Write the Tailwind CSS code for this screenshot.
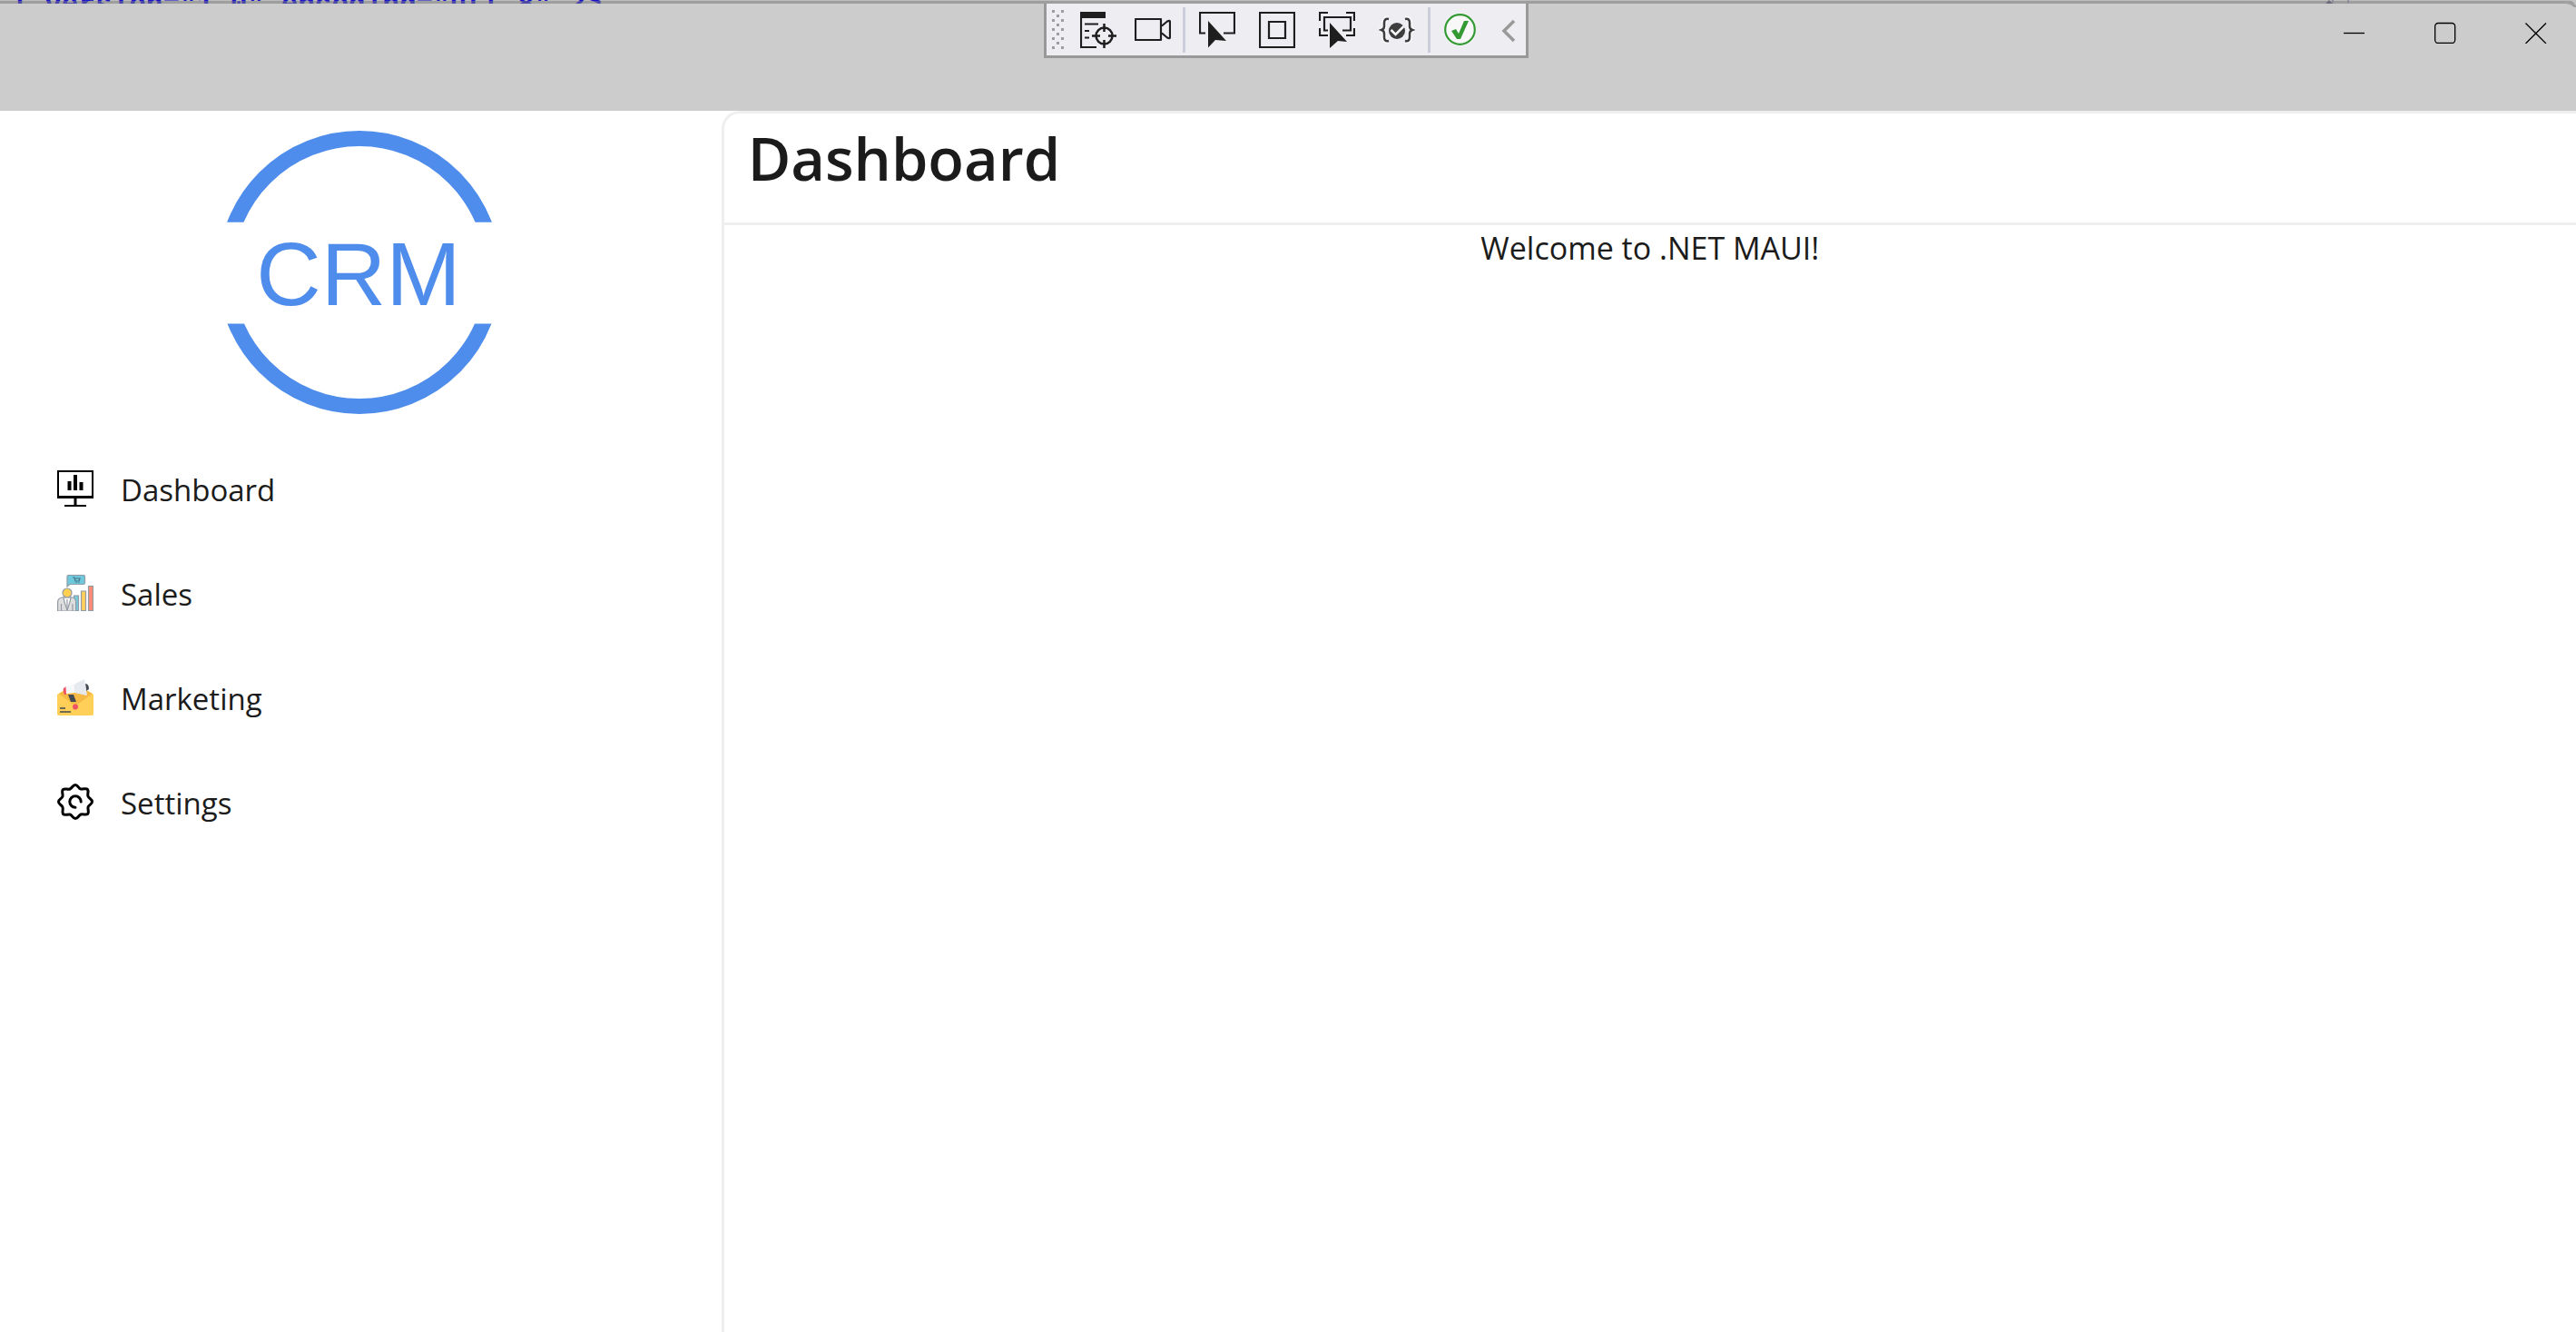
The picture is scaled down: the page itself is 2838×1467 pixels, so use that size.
<!DOCTYPE html>
<html lang="en">
<head>
<meta charset="utf-8">
<title>Dashboard</title>
<script src="https://cdn.jsdelivr.net/npm/@tailwindcss/browser@4"></script>
</head>
<body class="flex min-h-screen flex-col bg-white font-['Open_Sans',sans-serif] text-[#1b1b1b]">
<header class="relative h-[122px] bg-[#cccccc]">
  <!-- editor line behind the window's top edge -->
  <div class="relative h-1 overflow-hidden bg-[#bdbdbd]">
    <pre class="-mt-[10px] ml-3 font-['Liberation_Mono',monospace] text-[31px] leading-8 font-bold text-[#1a12cc]">l version="1.0" encoding="utf-8" ?&gt;</pre>
    <div class="absolute inset-x-0 top-px h-[3px] bg-[#808080]/50"></div>
  </div>
  <svg class="absolute top-0 right-0 h-2 w-3" viewBox="0 0 12 8" fill="none"><path d="M0 2.5Q7 2.5 12 8" stroke="#a0a0a0" stroke-width="3"/><path d="M5 0h7v5Q9 2 5 0" fill="#c4c4c4"/></svg>
  <svg class="absolute top-0 right-[225px] h-1 w-[60px]" viewBox="0 0 60 4"><path d="M-12 4l5-4 4 4z" fill="#6b6b7c"/><path d="M0 4l4-4 4 4z" fill="#6b6b7c" visibility="hidden"/><path d="M17 0v4M34 0v4" stroke="#8f8f9c" stroke-width="2"/></svg>
  <svg class="absolute top-0 right-[268px] h-1 w-2" viewBox="0 0 8 4"><path d="M0 4l4-4 4 4z" fill="#6b6b7c"/></svg>

  <div role="toolbar" aria-label="Debug tools" class="absolute top-1 left-1/2 -ml-[269px] flex h-[60px] w-[534px] items-center border-[3px] border-t-0 border-[#999999] bg-[#eeedf2] pt-px pl-1.5 text-[#1e1e1e]">
    <svg class="h-[44px] w-[14px]" viewBox="0 0 14 44" fill="#9c9ca2"><path d="M0 0h3v3H0zM10 0h3v3h-3zM5 5h3v3H5zM0 10h3v3H0zM10 10h3v3h-3zM5 15h3v3H5zM0 20h3v3H0zM10 20h3v3h-3zM5 25h3v3H5zM0 30h3v3H0zM10 30h3v3h-3zM5 35h3v3H5zM0 40h3v3H0zM10 40h3v3h-3z"/></svg>
    <button aria-label="Live visual tree" class="ml-[17px]"><svg class="size-10" viewBox="0 0 40 40" fill="none" stroke="currentColor" stroke-width="2.2"><path d="M0 0h28v7H0z" fill="currentColor" stroke="none"/><path d="M1 6v33h17M5 13.5h15M5 21h5M5 28.500h5"/><circle cx="26.500" cy="26.500" r="9" stroke-width="2.500"/><path d="M26.500 13v9M26.500 31v9M13 26.500h9M31 26.500h9" stroke-width="2.500"/></svg></button>
    <button aria-label="Record" class="ml-5"><svg class="size-10" viewBox="0 0 40 40" fill="none" stroke="currentColor" stroke-width="2.2" stroke-linejoin="round"><path d="M1 8h28v23H1zM30 15.500l6-5q3-1.500 3 .5v17q0 2-3 .5l-6-5"/></svg></button>
    <div class="ml-[13px] h-[50px] w-[3px] bg-[#cccedb]"></div>
    <button aria-label="Select element" class="ml-[15px]"><svg class="size-10" viewBox="0 0 40 40" fill="none" stroke="currentColor" stroke-width="2.2"><path d="M7 23.500H1V1h38v22.500H27"/><path d="M10 10l20 22-12-1-8 8.500z" fill="currentColor" stroke="none"/></svg></button>
    <button aria-label="Display layout adorners" class="ml-[26px]"><svg class="size-10" viewBox="0 0 40 40" fill="none" stroke="currentColor" stroke-width="2.2"><path d="M1 1h38v38H1zM11 11h18v18H11z"/></svg></button>
    <button aria-label="Track focused element" class="ml-[26px]"><svg class="size-10" viewBox="0 0 40 40" fill="none" stroke="currentColor" stroke-width="2.2"><path d="M1 10V1h9M30 1h9v9M1 18v8h9M39 18v8h-9M10 20.500H6V6h29v14.500h-9"/><path d="M12 12l19 21-10-1-9 8z" fill="currentColor" stroke="none"/></svg></button>
    <button aria-label="Binding failures" class="ml-[26px]"><svg class="size-10" viewBox="0 0 40 40" fill="none"><g stroke="#fff" stroke-width="6" opacity=".5"><path d="M11 8q-5-1-5 4v4q0 3-3 4 3 1 3 4v4q0 5 5 4M29 8q5-1 5 4v4q0 3 3 4-3 1-3 4v4q0 5-5 4"/></g><path d="M11 8q-5-1-5 4v4q0 3-3 4 3 1 3 4v4q0 5 5 4M29 8q5-1 5 4v4q0 3 3 4-3 1-3 4v4q0 5-5 4" stroke="#3d3d3d" stroke-width="2.500"/><circle cx="20" cy="21" r="9" fill="#3d3d3d"/><path d="M13.500 20l5 5 9-9" stroke="#f6f6f8" stroke-width="2.500"/></svg></button>
    <div class="ml-[14px] h-[50px] w-[3px] bg-[#cccedb]"></div>
    <button aria-label="Hot reload is on" class="ml-[13px]"><svg class="size-10" viewBox="0 0 40 40" fill="none"><circle cx="19.500" cy="19.500" r="18" fill="#f7f8f7"/><circle cx="19.500" cy="19.500" r="16.300" stroke="#339933" stroke-width="2.200"/><path d="M10 21l5-2 3 5 6-14 5 0-9 20h-4z" fill="#339933"/></svg></button>
    <button aria-label="Collapse" class="ml-[19px]"><svg class="h-10 w-6" viewBox="0 0 24 40" fill="none"><path d="M20 10L9 21l11 11" stroke="#999" stroke-width="3.500"/></svg></button>
  </div>

  <div class="absolute top-1 right-0 flex h-16 gap-3 text-black">
    <button aria-label="Minimize" class="grid w-[88px] place-items-center"><svg class="size-6" viewBox="0 0 24 24"><path d="M0 12.500h23" stroke="currentColor" stroke-width="1.300"/></svg></button>
    <button aria-label="Maximize" class="grid w-[88px] place-items-center"><svg class="size-6" viewBox="0 0 24 24" fill="none"><rect x=".7" y="1.500" width="22" height="22" rx="3.500" stroke="currentColor" stroke-width="1.300"/></svg></button>
    <button aria-label="Close" class="grid w-[88px] place-items-center"><svg class="size-6" viewBox="0 0 24 24"><path d="M.5 1.500l22.500 22.500M23 1.500L.5 24" stroke="currentColor" stroke-width="1.300"/></svg></button>
  </div>
</header>

<div class="flex flex-1">
  <aside class="w-[28%] shrink-0 pr-[3px]">
    <svg class="mx-auto mt-[22px] size-[312px]" viewBox="0 0 312 312" role="img" aria-label="CRM">
      <clipPath id="bands"><path d="M0 0h312v100.700H0zM0 212.500h312V312H0z"/></clipPath>
      <circle cx="156" cy="156" r="147.500" fill="none" stroke="#4f8ded" stroke-width="17" clip-path="url(#bands)"/>
      <text x="155" y="192" text-anchor="middle" class="fill-[#4f8ded] font-['Liberation_Sans',sans-serif] text-[99px]">CRM</text>
    </svg>
    <nav class="mt-6 text-[33px]">
      <a href="#" class="flex h-[115px] items-center gap-[30px] pl-[63px]">
        <svg class="size-10" viewBox="0 0 40 40" fill="none" stroke="#000"><path d="M1 1h38v28H1z" stroke-width="2"/><path d="M0 29.500h40" stroke-width="3"/><path d="M20 30v8" stroke-width="3"/><path d="M8 39h24" stroke-width="2"/><path d="M13.500 12v10M20 5v17M26.500 13v9" stroke-width="4"/></svg>
        <span class="pt-1">Dashboard</span></a>
      <a href="#" class="flex h-[115px] items-center gap-[30px] pl-[63px]">
        <svg class="size-10" viewBox="0 0 40 40" fill="none" stroke="#929ba5" stroke-width="1.200"><path d="M11 13V2q0-1.500 1.500-1.500h16Q30.500.5 30.500 2v7q0 1.500-2 1.500H14z" fill="#6fc9dd"/><path d="M17 3h2l1 4h4l1-3h-5M21 8v1M24 8v1" stroke="#4b7486"/><path d="M18.500 23h5v16.500h-5z" fill="#76cbdd"/><path d="M26.500 18h5v21.500h-5z" fill="#ffd15c"/><path d="M34.500 12.500h5v27h-5z" fill="#ff8b76"/><path d="M.6 40V30q0-4 5-5h11q4 1 4 5v10z" fill="#dedede"/><path d="M7 25l1 5 3 9 3-9 1-5z" fill="#fff"/><path d="M11 27v12M4.500 32v8M17 32v8"/><circle cx="11" cy="20" r="5" fill="#ffd050"/></svg>
        <span class="pt-1">Sales</span></a>
      <a href="#" class="flex h-[115px] items-center gap-[30px] pl-[63px]">
        <svg class="size-10" viewBox="0 0 40 40"><path d="M0 17l8-5h24l8 5v21q0 2-2 2H2q-2 0-2-2z" fill="#ffcf57"/><path d="M2 16l7-4h23l7 4-17 12q-2 1-4 0z" fill="#f5b944"/><path d="M12 17h6l3 8h-6z" fill="#434a54"/><path d="M31 5q4 0 4 6l-3 2z" fill="#434a54"/><path d="M7 10l3-2v9H8Q6 13 7 10" fill="#ef5366"/><path d="M9.500 8L19 5.500V15l-9 1z" fill="#f7f8fa"/><path d="M19 5.500L30 0l3 18-14-3z" fill="#e6e9ed"/><circle cx="20" cy="30.500" r="3" fill="#ef5366"/><path d="M3 32h6M3 36h12" stroke="#434a54" stroke-width="1.500"/></svg>
        <span class="pt-1">Marketing</span></a>
      <a href="#" class="flex h-[115px] items-center gap-[30px] pl-[63px]">
        <svg class="size-10" viewBox="0 0 40 40" fill="none" stroke="#000" stroke-width="3" stroke-linecap="round" stroke-linejoin="round"><path d="M20 1.500c3 0 3.500 4 6 4.500s6-1.500 7.500.5-.5 5 .5 7.500 4.500 3 4.500 6-4 3.500-4.500 6 1.500 6-.5 7.500-5-.5-7.500.5-3 4.500-6 4.500-3.500-4-6-4.500-6 1.500-7.500-.5.5-5-.5-7.500-4.500-3-4.500-6 4-3.500 4.500-6-1.500-6 .5-7.500 5 .5 7.500-.5 3-4.500 6-4.500z"/><path d="M20 26.200a6.200 6.200 0 1 1 6.200-6.200"/></svg>
        <span class="pt-1">Settings</span></a>
    </nav>
  </aside>
  <main class="min-w-0 flex-1 rounded-tl-[20px] border-t-[3px] border-l-[3px] border-[#efefef]">
    <div class="h-[123px] border-b-[3px] border-[#efefef] pl-[26px]">
      <h1 class="pt-1 text-[65px] leading-[90px] font-semibold">Dashboard</h1>
    </div>
    <p class="pt-0.5 text-center text-[34px] leading-[46px]">Welcome to .NET MAUI!</p>
  </main>
</div>
</body>
</html>
